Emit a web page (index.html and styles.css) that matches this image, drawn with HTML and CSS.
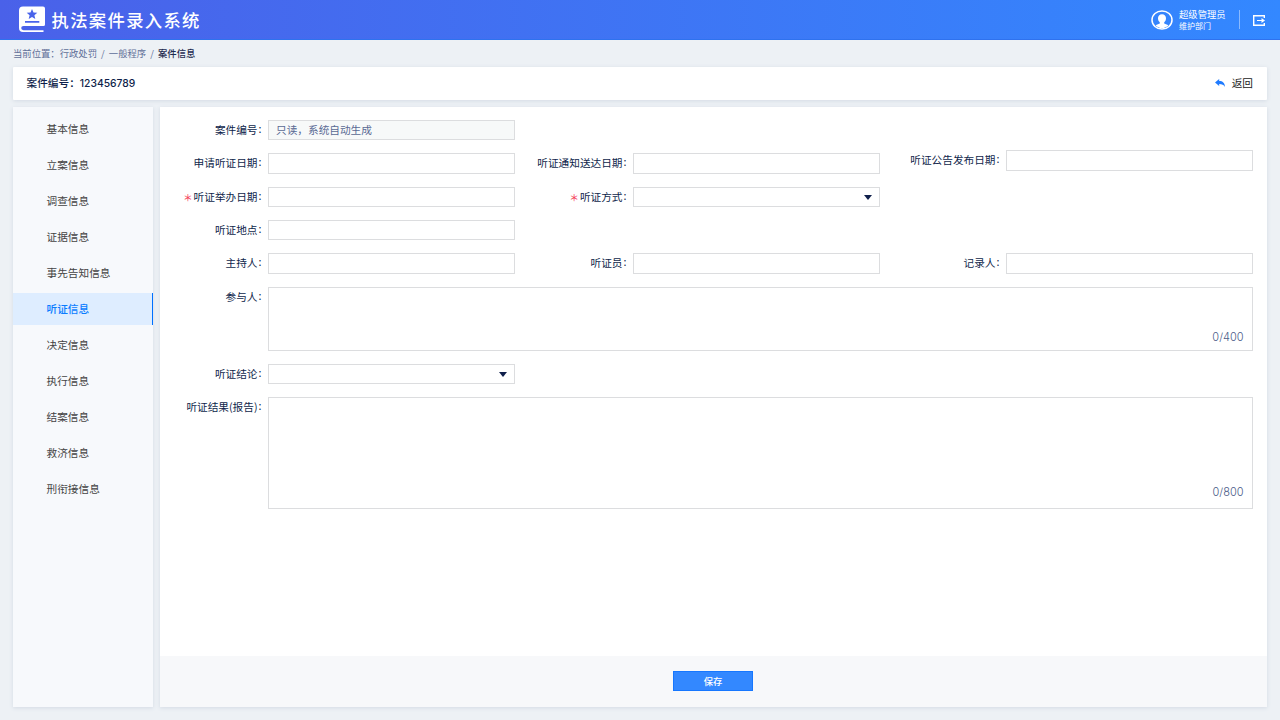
FILE: index.html
```html
<!DOCTYPE html>
<html lang="zh-CN">

<head>
    <meta charset="UTF-8">
    <meta name="viewport" content="width=device-width, initial-scale=1.0">
    <title>执法案件录入系统</title>
    <link rel="stylesheet" href="styles.css">
</head>

<body>
    <header class="header">
        <svg class="logo" width="26" height="27" viewBox="0 0 26 27">
            <path fill="#fff" d="M4 .5H24Q26 .5 26 2.500V18.500Q26 20 24.500 20H4.500Q2.200 20 2.200 22T4.500 24.200H24.500V26H4Q0 26 0 22V4.500Q0 .5 4 .5Z" />
            <path fill="#4a64ea" d="M13 3l1.500 3.500 3.800.3-2.900 2.500.9 3.700-3.300-2-3.300 2 .9-3.700-2.900-2.500 3.800-.3zM6 15h14.300v1.700H6z" />
        </svg>
        <h1>执法案件录入系统</h1>
        <div class="user">
            <svg class="avatar" width="22" height="20" viewBox="0 0 22 20">
                <ellipse cx="11" cy="10" rx="10" ry="9.100" fill="none" stroke="#fff" stroke-width="1.500" />
                <path fill="#fff" d="M11 4.200c2.600 0 4 1.700 4 4 0 1.700-.7 3.300-1.800 4.100v1.200l4.300 1.700c-1.700 1.900-4 2.800-6.500 2.800s-4.800-.9-6.500-2.800l4.300-1.700v-1.200C7.700 11.500 7 9.900 7 8.200c0-2.300 1.400-4 4-4z" />
            </svg>
            <div class="user-info">
                <span class="name">超级管理员</span>
                <span class="dept">维护部门</span>
            </div>
            <svg class="logout" width="12" height="11" viewBox="0 0 12 11">
                <path fill="none" stroke="#fff" stroke-width="1.400" d="M11.300 2.900V.7H.7v9.600h10.600V8.100" />
                <path fill="#fff" d="M4 4.900h4.500V2.900L12 5.500 8.500 8.100v-2H4z" />
            </svg>
        </div>
    </header>

    <nav class="crumbs">
        <span>当前位置：</span><span>行政处罚</span><i>/</i><span>一般程序</span><i>/</i><b>案件信息</b>
    </nav>

    <div class="case-bar">
        <strong>案件编号：<span>123456789</span></strong>
        <a href="#" class="back">
            <svg width="10" height="8" viewBox="0 0 10 8">
                <path fill="#1f7bff" d="M0 3.500L4.200 0v2c3.500 0 5.600 1.800 5.800 6C8.800 5.700 7 5 4.200 5v2z" />
            </svg>
            返回
        </a>
    </div>

    <div class="content">
        <ul class="side">
            <li>基本信息</li>
            <li>立案信息</li>
            <li>调查信息</li>
            <li>证据信息</li>
            <li>事先告知信息</li>
            <li class="active">听证信息</li>
            <li>决定信息</li>
            <li>执行信息</li>
            <li>结案信息</li>
            <li>救济信息</li>
            <li>刑衔接信息</li>
        </ul>

        <main class="panel">
            <form class="form">
                <div class="row">
                    <div class="field"><label>案件编号<s>:</s></label><div class="box readonly">只读，系统自动生成</div></div>
                </div>
                <div class="row">
                    <div class="field"><label>申请听证日期<s>:</s></label><div class="box"></div></div>
                    <div class="field"><label>听证通知送达日期<s>:</s></label><div class="box"></div></div>
                    <div class="field raised"><label>听证公告发布日期<s>:</s></label><div class="box"></div></div>
                </div>
                <div class="row">
                    <div class="field"><label><em>＊</em>听证举办日期<s>:</s></label><div class="box"></div></div>
                    <div class="field"><label><em>＊</em>听证方式<s>:</s></label><div class="box select"></div></div>
                </div>
                <div class="row">
                    <div class="field"><label>听证地点<s>:</s></label><div class="box"></div></div>
                </div>
                <div class="row">
                    <div class="field"><label>主持人<s>:</s></label><div class="box"></div></div>
                    <div class="field"><label>听证员<s>:</s></label><div class="box"></div></div>
                    <div class="field"><label>记录人<s>:</s></label><div class="box"></div></div>
                </div>
                <div class="field wide"><label>参与人<s>:</s></label><div class="area">0/400</div></div>
                <div class="row">
                    <div class="field"><label>听证结论<s>:</s></label><div class="box select"></div></div>
                </div>
                <div class="field wide"><label>听证结果(报告)<s>:</s></label><div class="area tall">0/800</div></div>
            </form>
            <div class="footer">
                <button type="button">保存</button>
            </div>
        </main>
    </div>
</body>

</html>
```
FILE: styles.css
```css
* {
    box-sizing: border-box;
}

body {
    margin: 0;
    height: 720px;
    display: flex;
    flex-direction: column;
    overflow: hidden;
    background-color: #edf1f5;
    color: #0f1f4b;
    font-family: "Noto Sans CJK SC", sans-serif;
    font-size: 10.67px;
    line-height: 16px;
}

.header {
    display: flex;
    align-items: center;
    height: 40px;
    padding: 0 15px 0 19px;
    color: #fff;
    background: linear-gradient(90deg, #4a61e9, #3388ff);
    border-bottom: 1px solid #2f72ee;
}

.logo {
    margin-right: 6.5px;
}

.header h1 {
    margin: 0;
    font-size: 17.33px;
    font-weight: 500;
    line-height: 26px;
    letter-spacing: 1.33px;
}

.user {
    display: flex;
    align-items: center;
    margin-left: auto;
}

.user-info {
    display: flex;
    flex-direction: column;
    justify-content: center;
    width: 61px;
    height: 19px;
    margin: 0 13px 0 6px;
    border-right: 1px solid #8abaff;
}

.name {
    font-size: 9.33px;
    line-height: 12px;
}

.dept {
    font-size: 8px;
    line-height: 11px;
}

.logout {
    margin-top: 1px;
}

.crumbs {
    height: 27px;
    padding-left: 13px;
    font-size: 9.33px;
    line-height: 27px;
    color: #5f6f98;
}

.crumbs i {
    margin: 0 4.1px;
    font-style: normal;
}

.crumbs b {
    font-weight: 500;
    color: #1e2c50;
}

.case-bar {
    display: flex;
    justify-content: space-between;
    align-items: center;
    height: 33px;
    margin: 0 13px 7px;
    padding: 0 14px 1px 13.5px;
    background-color: #fff;
    border-radius: 1px;
    box-shadow: 0 1px 4px #d3dae4;
}

.case-bar strong {
    font-weight: 500;
}

.case-bar strong span {
    font-family: Inter, sans-serif;
    font-size: 10.33px;
}

.back {
    display: flex;
    align-items: center;
    gap: 7px;
    color: #222;
    text-decoration: none;
}

.content {
    display: flex;
    gap: 7px;
    height: 600px;
    margin: 0 13px;
}

.side {
    width: 140px;
    margin: 0;
    padding: 6px 0 0;
    list-style: none;
    background-color: #f7f9fc;
    box-shadow: 0 1px 4px #d3dae4;
    color: #444;
}

.side li {
    height: 32px;
    margin-bottom: 4px;
    padding-left: 33.5px;
    line-height: 32px;
}

.side .active {
    background-color: #deedff;
    border-right: 1px solid #0070ff;
    color: #0a7cff;
    font-weight: 500;
}

.panel {
    display: flex;
    flex-direction: column;
    flex: 1;
    background-color: #fff;
    box-shadow: 0 1px 4px #d3dae4;
}

.form {
    display: flex;
    flex-direction: column;
    gap: 13.33px;
    flex: 1;
    padding: 13px 14px 0 0;
}

.row {
    display: grid;
    grid-template-columns: 355px 365px 373px;
    height: 20px;
}

.field {
    display: flex;
    justify-content: flex-end;
}

.field label {
    margin-right: 6.5px;
    line-height: 20px;
    white-space: nowrap;
}

.field s {
    position: relative;
    top: -1px;
    margin-left: 1px;
    text-decoration: none;
}

.field em {
    margin-right: 1px;
    color: #f5455c;
    font-size: 9.33px;
    font-style: normal;
    font-weight: 500;
}

.raised {
    margin: -3px 0 3px;
}

.box {
    width: 247px;
    height: 20.33px;
    border: 1px solid #dcdddf;
}

.readonly {
    padding-left: 7px;
    line-height: 18px;
    background-color: #f7f9f9;
    color: #5a6a94;
}

.select {
    display: flex;
    justify-content: flex-end;
    align-items: center;
    padding-right: 7px;
}

.select::after {
    content: "";
    margin-top: 1px;
    border: 4px solid transparent;
    border-top: 5px solid #0f1f4b;
    border-bottom: 0;
}

.area {
    display: flex;
    justify-content: flex-end;
    align-items: flex-end;
    width: 985px;
    height: 64px;
    padding: 0 8.5px 5px 0;
    border: 1px solid #dcdddf;
    color: #4a5b88;
    font-family: Inter, sans-serif;
    font-weight: 300;
    font-size: 11px;
}

.tall {
    height: 112px;
    padding-bottom: 8px;
}

.footer {
    display: flex;
    justify-content: center;
    align-items: center;
    height: 51px;
    padding: 0 1px 1px 0;
    background-color: #f7f8fa;
}

.footer button {
    width: 80px;
    height: 20px;
    padding: 0;
    border: 1px solid #1677ff;
    background-color: #3388ff;
    color: #fff;
    font-family: inherit;
    font-size: 9.33px;
    font-weight: 500;
    line-height: 18px;
}
```
